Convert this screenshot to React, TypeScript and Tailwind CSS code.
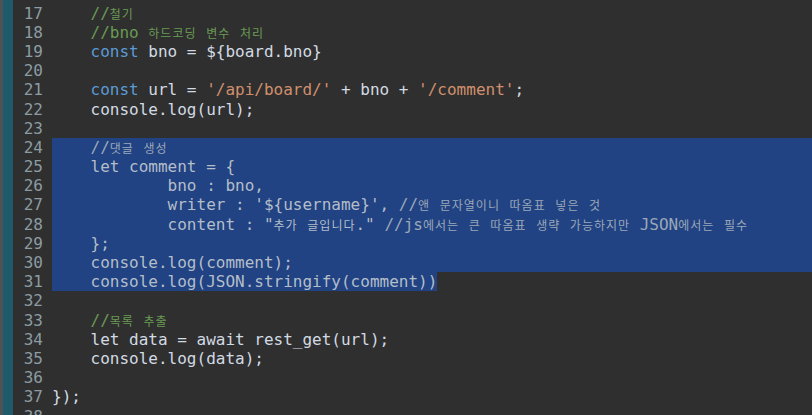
import React from "react";

// token kinds: k = keyword, s = string, c = comment, t = plain text
type Tok = [string, "k" | "s" | "c" | "t"];

const lines: { n: number; toks: Tok[]; sel?: "full" | "text" }[] = [
  { n: 17, toks: [["    ", "t"], ["//철기", "c"]] },
  { n: 18, toks: [["    ", "t"], ["//bno 하드코딩 변수 처리", "c"]] },
  { n: 19, toks: [["    ", "t"], ["const", "k"], [" bno = ${board.bno}", "t"]] },
  { n: 20, toks: [] },
  {
    n: 21,
    toks: [
      ["    ", "t"],
      ["const", "k"],
      [" url = ", "t"],
      ["'/api/board/'", "s"],
      [" + bno + ", "t"],
      ["'/comment'", "s"],
      [";", "t"],
    ],
  },
  { n: 22, toks: [["    console.log(url);", "t"]] },
  { n: 23, toks: [] },
  { n: 24, sel: "full", toks: [["    ", "t"], ["//댓글 생성", "c"]] },
  { n: 25, sel: "full", toks: [["    let comment = {", "t"]] },
  { n: 26, sel: "full", toks: [["            bno : bno,", "t"]] },
  {
    n: 27,
    sel: "full",
    toks: [
      ["            writer : '${username}', ", "t"],
      ["//앤 문자열이니 따옴표 넣은 것", "c"],
    ],
  },
  {
    n: 28,
    sel: "full",
    toks: [
      ['            content : "추가 글입니다." ', "t"],
      ["//js에서는 큰 따옴표 생략 가능하지만 JSON에서는 필수", "c"],
    ],
  },
  { n: 29, sel: "full", toks: [["    };", "t"]] },
  { n: 30, sel: "full", toks: [["    console.log(comment);", "t"]] },
  { n: 31, sel: "text", toks: [["    console.log(JSON.stringify(comment))", "t"]] },
  { n: 32, toks: [] },
  { n: 33, toks: [["    ", "t"], ["//목록 추출", "c"]] },
  { n: 34, toks: [["    let data = await rest_get(url);", "t"]] },
  { n: 35, toks: [["    console.log(data);", "t"]] },
  { n: 36, toks: [] },
  { n: 37, toks: [["});", "t"]] },
  { n: 38, toks: [] },
];

// Hangul is drawn smaller by the editor's fallback font
function Hangul({ text }: { text: string }) {
  const parts = text.split(/([\uAC00-\uD7A3]+)/);
  return (
    <>
      {parts.map((p, i) =>
        /[\uAC00-\uD7A3]/.test(p) ? (
          <span key={i} className="text-[12px] tracking-[1px] font-['Noto_Sans_CJK_KR',sans-serif]">
            {p}
          </span>
        ) : (
          <React.Fragment key={i}>{p}</React.Fragment>
        )
      )}
    </>
  );
}

const plainColor: Record<Tok[1], string> = {
  k: "text-[#5b9bd6]",
  s: "text-[#d18f6d]",
  c: "text-[#6a9a55]",
  t: "text-[#d2dae3]",
};

const selColor: Record<Tok[1], string> = {
  k: "text-[#b3bec9]",
  s: "text-[#b3bec9]",
  c: "text-[#9aa8b8]",
  t: "text-[#b3bec9]",
};

export default function App() {
  return (
    <div className="flex h-[415px] w-[812px] overflow-hidden bg-[#2f2f2f] font-['DejaVu_Sans_Mono','Noto_Sans_CJK_KR',monospace] text-[16px] leading-[19.2px]">
      {/* left markers */}
      <div className="w-[3px] shrink-0 bg-[#4e5254]" />
      <div className="w-[10px] shrink-0 bg-[#1f5a6b]" />

      {/* gutter */}
      <div className="w-[39px] shrink-0 pt-[3.6px] pr-[9px] text-right text-[#8b9ca3]">
        {lines.map((l) => (
          <div key={l.n} className="h-[19.2px] whitespace-pre">
            {l.n}
          </div>
        ))}
      </div>

      {/* code */}
      <div className="flex-1 pt-[3.6px]">
        {lines.map((l) => {
          const colors = l.sel ? selColor : plainColor;
          const body = l.toks.map(([text, kind], i) => (
            <span key={i} className={colors[kind]}>
              <Hangul text={text} />
            </span>
          ));
          return (
            <div
              key={l.n}
              className={`h-[19.2px] whitespace-pre ${l.sel === "full" ? "bg-[#214283]" : ""}`}
            >
              {l.sel === "text" ? <span className="inline-block h-[19.2px] bg-[#214283]">{body}</span> : body}
            </div>
          );
        })}
      </div>
    </div>
  );
}
